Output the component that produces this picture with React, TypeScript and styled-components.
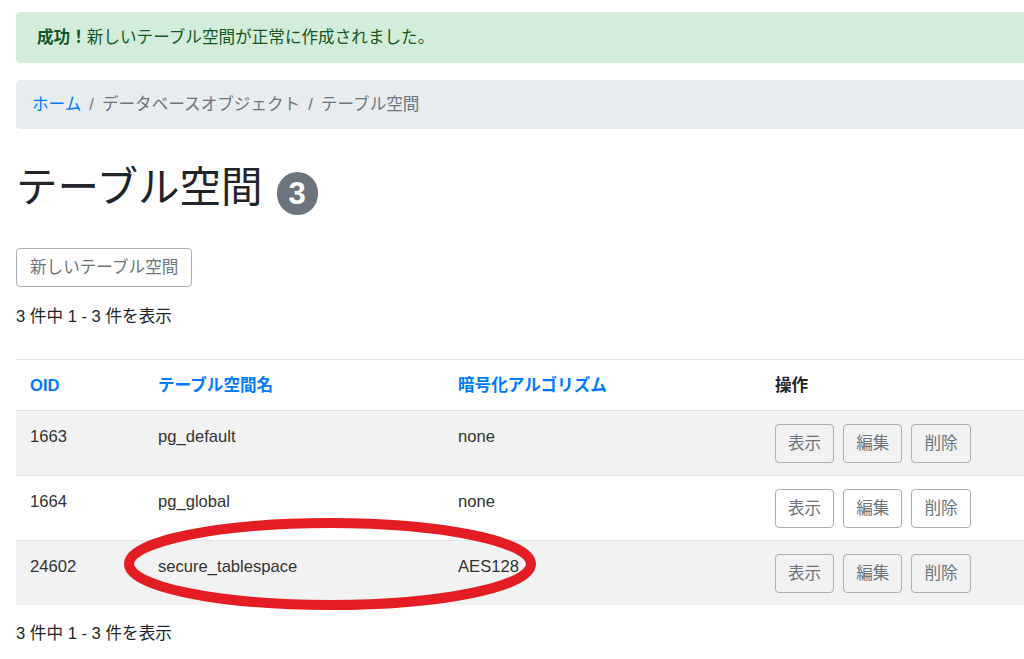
import React from "react";
import styled, { createGlobalStyle } from "styled-components";

const GlobalStyle = createGlobalStyle`
    html, body {
        margin: 0;
        padding: 0;
        overflow: hidden;
        background: #ffffff;
    }

    body {
        font-family: "Liberation Sans", "Noto Sans CJK JP", sans-serif;
        font-size: 16.6px;
        line-height: 25px;
        color: #212529;
    }
`;

const Page = styled.div`
    width: 1120px;
    padding: 12px 0 0 16px;
`;

const Alert = styled.div`
    padding: 12px 20px;
    margin-bottom: 17px;
    background: #d4edda;
    border: 1px solid #d4edda;
    border-radius: 4px;
    color: #155724;
`;

const Breadcrumb = styled.nav`
    display: flex;
    gap: 8px;
    padding: 12px 16px;
    background: #e9ecef;
    border-radius: 4px;
    color: #6c757d;
`;

const Crumb = styled.span<{ $link?: boolean }>`
    color: ${(p) => (p.$link ? "#007bff" : "#6c757d")};
`;

const Heading = styled.h1`
    display: flex;
    align-items: center;
    gap: 14px;
    margin: 31px 0 33px;
    font-size: 41.5px;
    line-height: 50px;
    font-weight: 400;
`;

const Badge = styled.span`
    display: inline-block;
    margin-top: 12px;
    padding: 7px 12px 6px;
    border-radius: 999px;
    background: #6c757d;
    color: #ffffff;
    font-size: 31px;
    line-height: 30px;
    font-weight: 700;
`;

const Button = styled.button`
    padding: 6px 12px;
    border: 1px solid #a9afb5;
    border-radius: 4px;
    background: transparent;
    color: #6c757d;
    font: inherit;
    line-height: 25px;
`;

const NewButton = styled(Button)`
    padding: 6px 13px;
`;

const Count = styled.div<{ $top: number; $bottom: number }>`
    margin: ${(p) => p.$top}px 0 ${(p) => p.$bottom}px;
`;

const TableWrap = styled.div`
    position: relative;
`;

const Table = styled.table`
    width: 100%;
    border-collapse: collapse;
    border-top: 1px solid #dee2e6;
`;

const HeadCell = styled.th<{ $plain?: boolean }>`
    padding: 13px 14px 12px;
    text-align: left;
    font-weight: 700;
    color: ${(p) => (p.$plain ? "#212529" : "#007bff")};
    border-bottom: 1px solid #dee2e6;
`;

const Row = styled.tr<{ $striped: boolean }>`
    background: ${(p) => (p.$striped ? "#f2f2f2" : "#ffffff")};
    border-bottom: 1px solid #dee2e6;

    &:last-child {
        border-bottom: none;
    }
`;

const Cell = styled.td`
    padding: 13px 14px 12px;
    vertical-align: top;
    color: #333333;
`;

const Actions = styled.div`
    display: flex;
    gap: 9px;
`;

const Marker = styled.svg`
    position: absolute;
    left: 107px;
    top: 159px;
    pointer-events: none;
`;

const rows = [
    { oid: "1663", name: "pg_default", algo: "none" },
    { oid: "1664", name: "pg_global", algo: "none" },
    { oid: "24602", name: "secure_tablespace", algo: "AES128" },
];

export default function App(): JSX.Element {
    return <>
        <GlobalStyle />
        <Page>
            <Alert>
                <strong>成功！</strong>新しいテーブル空間が正常に作成されました。
            </Alert>
            <Breadcrumb>
                <Crumb $link>ホーム</Crumb>
                <Crumb>/</Crumb>
                <Crumb>データベースオブジェクト</Crumb>
                <Crumb>/</Crumb>
                <Crumb>テーブル空間</Crumb>
            </Breadcrumb>
            <Heading>
                テーブル空間
                <Badge>3</Badge>
            </Heading>
            <NewButton>新しいテーブル空間</NewButton>
            <Count $top={17} $bottom={30}>3 件中 1 - 3 件を表示</Count>
            <TableWrap>
                <Table>
                    <colgroup>
                        <col style={{ width: 128 }} />
                        <col style={{ width: 300 }} />
                        <col style={{ width: 317 }} />
                        <col />
                    </colgroup>
                    <thead>
                        <tr>
                            <HeadCell>OID</HeadCell>
                            <HeadCell>テーブル空間名</HeadCell>
                            <HeadCell>暗号化アルゴリズム</HeadCell>
                            <HeadCell $plain>操作</HeadCell>
                        </tr>
                    </thead>
                    <tbody>
                        {rows.map((r, i) => (
                            <Row key={r.oid} $striped={i % 2 === 0}>
                                <Cell>{r.oid}</Cell>
                                <Cell>{r.name}</Cell>
                                <Cell>{r.algo}</Cell>
                                <Cell>
                                    <Actions>
                                        <Button>表示</Button>
                                        <Button>編集</Button>
                                        <Button>削除</Button>
                                    </Actions>
                                </Cell>
                            </Row>
                        ))}
                    </tbody>
                </Table>
                <Marker width="414" height="92" viewBox="0 0 414 92">
                    <ellipse cx="207" cy="46" rx="201" ry="41" fill="none" stroke="#e31d23" strokeWidth="10" />
                </Marker>
            </TableWrap>
            <Count $top={16} $bottom={0}>3 件中 1 - 3 件を表示</Count>
        </Page>
    </>;
}
